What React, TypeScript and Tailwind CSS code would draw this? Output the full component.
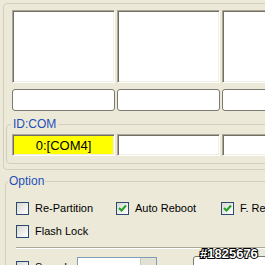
import React from "react";

const sunken =
  "border border-t-[#aca899] border-l-[#aca899] border-r-white border-b-white shadow-[inset_1px_1px_0_#716f64,inset_-1px_-1px_0_#f1efe2]";

function CheckBox({ checked, label }: { checked?: boolean; label: string }) {
  return (
    <div className="flex items-center gap-[6px] h-[13px]">
      <div className="w-[13px] h-[13px] shrink-0 border border-[#2a4a73] bg-gradient-to-br from-[#d8d8d2] to-white flex items-center justify-center">
        {checked && (
          <svg width="9" height="9" viewBox="0 0 9 9">
            <path d="M1 4 L3.5 6.5 L8 1.5" stroke="#21a121" strokeWidth="2" fill="none" />
          </svg>
        )}
      </div>
      <span className="whitespace-nowrap text-black">{label}</span>
    </div>
  );
}

export default function App() {
  const cols = [0, 1, 2];
  return (
    <div className="relative w-[265px] h-[265px] overflow-hidden bg-[#ece9d8] font-['Liberation_Sans',Arial,sans-serif] text-[11px] leading-none">
      {/* top group */}
      <div className="ml-[3px] mt-[3px] w-[330px] border border-[#d0d0bf] rounded-[4px] pb-[5px]">
        <div className="pl-[8px] pt-[6px] flex gap-[2px]">
          {cols.map((c) => (
            <div key={c} className={`w-[103px] h-[73px] shrink-0 bg-white ${sunken}`} />
          ))}
        </div>
        <div className="pl-[8px] mt-[6px] flex gap-[2px]">
          {cols.map((c) => (
            <div key={c} className="w-[103px] h-[22px] shrink-0 bg-white border border-[#7a796f] rounded-[3px]" />
          ))}
        </div>

        {/* ID:COM */}
        <div className="relative ml-[2px] mt-[13px] border border-[#d0d0bf] rounded-[4px] pl-[5px] pt-[9px] pb-[7px]">
          <span className="absolute -top-[7px] left-[4px] bg-[#ece9d8] px-[2px] text-[#1f4fb8] text-[12px]">
            ID:COM
          </span>
          <div className="flex gap-[2px]">
            <div className={`w-[103px] h-[22px] shrink-0 bg-[#ffff00] flex items-center justify-center text-[13px] text-black ${sunken}`}>
              0:[COM4]
            </div>
            <div className={`w-[103px] h-[22px] shrink-0 bg-white ${sunken}`} />
            <div className={`w-[103px] h-[22px] shrink-0 bg-white ${sunken}`} />
          </div>
        </div>
      </div>

      {/* Option */}
      <div className="relative ml-[5px] mt-[11px] w-[330px] h-[120px] border border-[#d0d0bf] rounded-[4px] pl-[10px] pt-[20px]">
        <span className="absolute -top-[7px] left-[2px] bg-[#ece9d8] px-[1px] text-[#1f4fb8] text-[12px]">
          Option
        </span>
        <div className="flex flex-col gap-[10px]">
          <div className="flex">
            <div className="w-[100px]">
              <CheckBox label="Re-Partition" />
            </div>
            <div className="w-[105px]">
              <CheckBox checked label="Auto Reboot" />
            </div>
            <div>
              <CheckBox checked label="F. Reset" />
            </div>
          </div>
          <CheckBox label="Flash Lock" />
        </div>
        <div className="mt-[9px] h-[2px] border-t border-[#aca899] border-b border-b-white" />
        <div className="mt-[8px] flex items-start">
          <div className="mt-[4px]">
            <CheckBox label="Speed" />
          </div>
          <div className="ml-[10px] w-[80px] h-[22px] border border-[#7f9db9] bg-white flex justify-end">
            <div className="w-[16px] h-full bg-[#e3e1d6] border-l border-[#c9c7ba]" />
          </div>
          <span className="ml-[18px] mt-[5px] text-[12px] font-bold">::</span>
          <div className="ml-[10px] -mt-[1px] w-[80px] h-[22px] border border-[#7a796f] rounded-[3px] bg-white" />
        </div>
      </div>

      {/* watermark */}
      <div className="absolute left-[200px] top-[247px] text-[13px] font-bold text-white [-webkit-text-stroke:2px_black] [paint-order:stroke_fill] leading-none">
        #1825676
      </div>
    </div>
  );
}
